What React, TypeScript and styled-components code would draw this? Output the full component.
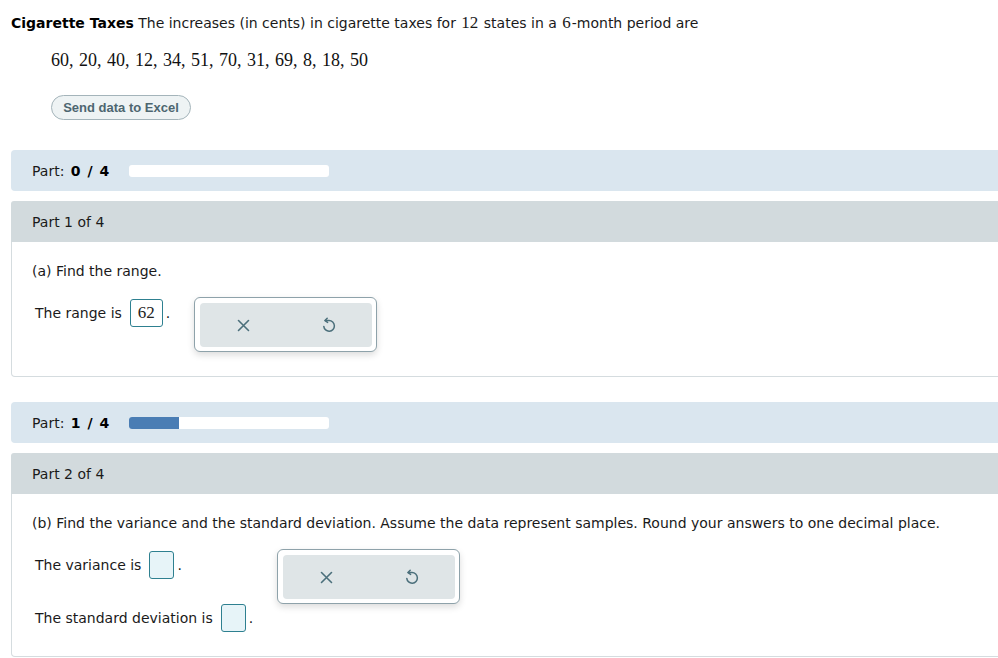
import React from "react";
import styled, { createGlobalStyle } from "styled-components";

const Global = createGlobalStyle`
  html, body { margin: 0; padding: 0; background: #fff; overflow: hidden; }
  body { font-family: "DejaVu Sans", Verdana, sans-serif; font-size: 14px; color: #1a1a1a; }
`;

const Page = styled.div`
  padding: 13px 0 0 11px;
  width: 1010px;
`;

const Intro = styled.p`
  margin: 0;
  line-height: 20px;
  white-space: nowrap;
`;

const Bold = styled.b`
  font-weight: bold;
  color: #000;
`;

const Score = styled.b`
  font-weight: bold;
  color: #000;
  margin-left: 2px;
`;

const Slash = styled.span`
  padding: 0 2px;
`;

const MathNum = styled.span`
  font-family: "Liberation Serif", "Times New Roman", serif;
  font-size: 17px;
  padding: 0 1px;
`;

const DataLine = styled.div`
  margin: 15px 0 0 40px;
  font-family: "Liberation Serif", "Times New Roman", serif;
  font-size: 18px;
  line-height: 24px;
  word-spacing: 1px;
  color: #111;
`;

const ExcelButton = styled.button`
  display: block;
  margin: 23px 0 0 40px;
  height: 25px;
  width: 140px;
  padding: 0;
  border: 1px solid #a4b4ba;
  border-radius: 13px;
  background: #eef3f4;
  color: #4d6670;
  font-family: "Liberation Sans", Arial, sans-serif;
  font-weight: bold;
  font-size: 13px;
`;

const PartBar = styled.div<{ $top: number }>`
  margin-top: ${(p) => p.$top}px;
  height: 41px;
  background: #dae6ef;
  border-radius: 4px 0 0 4px;
  display: flex;
  align-items: center;
  padding-left: 21px;
`;

const PartLabel = styled.span`
  width: 97px;
  white-space: pre;
`;

const Track = styled.div`
  width: 200px;
  height: 12px;
  border-radius: 3px;
  background: #fff;
  overflow: hidden;
`;

const Fill = styled.div`
  height: 100%;
  background: #4a7db4;
`;

const PartHeader = styled.div`
  margin-top: 10px;
  height: 41px;
  background: #d2dadd;
  border-radius: 3px 0 0 0;
  display: flex;
  align-items: center;
  padding-left: 21px;
`;

const Content = styled.div`
  border: 1px solid #d5dcdf;
  border-top: none;
  border-radius: 0 0 0 4px;
  padding: 19px 20px 24px 20px;
`;

const Question = styled.div`
  line-height: 20px;
  white-space: nowrap;
`;

const AnswerRow = styled.div`
  margin-top: 16px;
  display: flex;
  align-items: flex-start;
  gap: 24px;
  padding-left: 3px;
`;

const AnswerCol = styled.div`
  padding-top: 2px;
  display: flex;
  flex-direction: column;
  gap: 25px;
`;

const AnswerLine = styled.div`
  display: flex;
  align-items: center;
  height: 28px;
  white-space: nowrap;
`;

const Input = styled.div<{ $filled?: boolean }>`
  box-sizing: border-box;
  margin: 0 3px 0 8px;
  height: 28px;
  min-width: 25px;
  padding: 0 7px;
  border: 1px solid #2e8090;
  border-radius: 3px;
  background: ${(p) => (p.$filled ? "#fff" : "#e7f4f8")};
  display: flex;
  align-items: center;
  justify-content: center;
  font-family: "Liberation Serif", "Times New Roman", serif;
  font-size: 17px;
  color: #222;
`;

const ActionBox = styled.div`
  box-sizing: border-box;
  width: 183px;
  height: 55px;
  padding: 5px 4px 4px 5px;
  border: 1px solid #8ea2aa;
  border-radius: 6px;
  background: #fff;
  box-shadow: 0 3px 7px rgba(0, 0, 0, 0.14);
`;

const ActionInner = styled.div`
  height: 100%;
  border-radius: 4px;
  background: #dfe5e7;
  display: flex;
`;

const ActionBtn = styled.button`
  flex: 1;
  border: none;
  background: transparent;
  padding: 0;
  display: flex;
  align-items: center;
  justify-content: center;
  color: #4b6f7b;
`;

const XIcon = () => (
  <svg width="13" height="13" viewBox="0 0 13 13" fill="none" stroke="currentColor" strokeWidth="1.6" strokeLinecap="round">
    <path d="M1.5 1.5 L11.5 11.5 M11.5 1.5 L1.5 11.5" />
  </svg>
);

const UndoIcon = () => (
  <svg width="14" height="17" viewBox="0 0 14 17" fill="none" stroke="currentColor" strokeWidth="1.5" strokeLinecap="round" strokeLinejoin="round">
    <path d="M5.2 1.2 L3 3.6 L5.6 5.4" />
    <path d="M3.2 3.6 H7 A5.3 5.3 0 1 1 1.8 9.4" />
  </svg>
);

const Actions = () => (
  <ActionBox>
    <ActionInner>
      <ActionBtn aria-label="clear"><XIcon /></ActionBtn>
      <ActionBtn aria-label="undo"><UndoIcon /></ActionBtn>
    </ActionInner>
  </ActionBox>
);

const Progress = ({ done, top }: { done: number; top: number }) => (
  <PartBar $top={top}>
    <PartLabel>
      {"Part: "}
      <Score>
        {done}
        <Slash>{" / "}</Slash>4
      </Score>
    </PartLabel>
    <Track>
      <Fill style={{ width: `${(done / 4) * 100}%` }} />
    </Track>
  </PartBar>
);

export default function App() {
  return (
    <>
      <Global />
      <Page>
        <Intro>
          <Bold>Cigarette Taxes</Bold> The increases (in cents) in cigarette taxes for <MathNum>12</MathNum> states in
          a <MathNum>6</MathNum>-month period are
        </Intro>
        <DataLine>60, 20, 40, 12, 34, 51, 70, 31, 69, 8, 18, 50</DataLine>
        <ExcelButton>Send data to Excel</ExcelButton>

        <Progress done={0} top={30} />
        <PartHeader>Part 1 of 4</PartHeader>
        <Content>
          <Question>(a) Find the range.</Question>
          <AnswerRow>
            <AnswerCol>
              <AnswerLine>
                The range is <Input $filled>62</Input>.
              </AnswerLine>
            </AnswerCol>
            <Actions />
          </AnswerRow>
        </Content>

        <Progress done={1} top={25} />
        <PartHeader>Part 2 of 4</PartHeader>
        <Content>
          <Question>
            (b) Find the variance and the standard deviation. Assume the data represent samples. Round your answers to one
            decimal place.
          </Question>
          <AnswerRow>
            <AnswerCol>
              <AnswerLine>
                The variance is <Input />.
              </AnswerLine>
              <AnswerLine>
                The standard deviation is <Input />.
              </AnswerLine>
            </AnswerCol>
            <Actions />
          </AnswerRow>
        </Content>
      </Page>
    </>
  );
}
